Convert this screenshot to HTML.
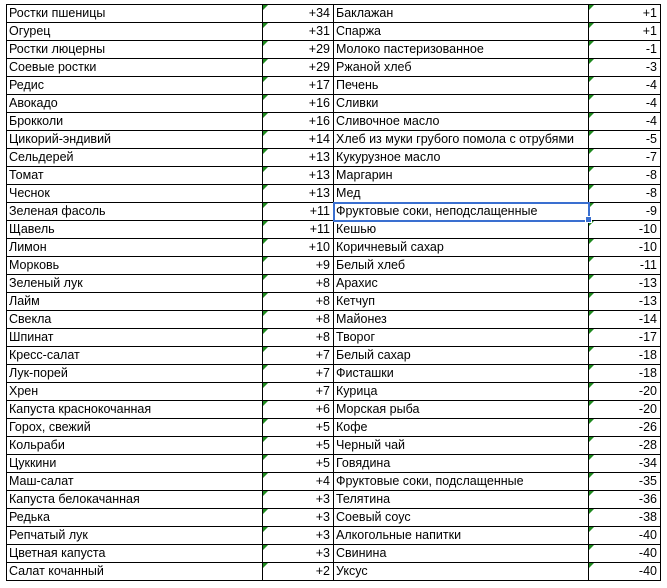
<!DOCTYPE html>
<html><head><meta charset="utf-8"><style>
body{margin:0;background:#fff;width:667px;height:588px;overflow:hidden;font-family:"Liberation Sans",Arial,sans-serif;font-size:12.5px;color:#000}
table{position:absolute;left:6px;top:4px;border-collapse:collapse;table-layout:fixed}
td{border:1px solid #000;height:17px;padding:0 2px;line-height:17px;white-space:nowrap;overflow:visible;position:relative}
td.n{text-align:right;padding-right:3px}
td.n::before{content:"";position:absolute;left:0;top:0;border-top:5px solid #1e8a1e;border-right:5px solid transparent}
.sel{position:absolute;left:333px;top:202px;width:253px;height:16px;border:2px solid #3a6fd0;box-sizing:content-box}
.h{position:absolute;left:585px;top:216px;width:5px;height:5px;background:#3a6fd0;border:1px solid #fff}
</style></head><body>
<table>
<colgroup><col style="width:256px"><col style="width:71px"><col style="width:255px"><col style="width:72px"></colgroup>
<tr><td>Ростки пшеницы</td><td class="n">+34</td><td>Баклажан</td><td class="n">+1</td></tr>
<tr><td>Огурец</td><td class="n">+31</td><td>Спаржа</td><td class="n">+1</td></tr>
<tr><td>Ростки люцерны</td><td class="n">+29</td><td>Молоко пастеризованное</td><td class="n">-1</td></tr>
<tr><td>Соевые ростки</td><td class="n">+29</td><td>Ржаной хлеб</td><td class="n">-3</td></tr>
<tr><td>Редис</td><td class="n">+17</td><td>Печень</td><td class="n">-4</td></tr>
<tr><td>Авокадо</td><td class="n">+16</td><td>Сливки</td><td class="n">-4</td></tr>
<tr><td>Брокколи</td><td class="n">+16</td><td>Сливочное масло</td><td class="n">-4</td></tr>
<tr><td>Цикорий-эндивий</td><td class="n">+14</td><td>Хлеб из муки грубого помола с отрубями</td><td class="n">-5</td></tr>
<tr><td>Сельдерей</td><td class="n">+13</td><td>Кукурузное масло</td><td class="n">-7</td></tr>
<tr><td>Томат</td><td class="n">+13</td><td>Маргарин</td><td class="n">-8</td></tr>
<tr><td>Чеснок</td><td class="n">+13</td><td>Мед</td><td class="n">-8</td></tr>
<tr><td>Зеленая фасоль</td><td class="n">+11</td><td>Фруктовые соки, неподслащенные</td><td class="n">-9</td></tr>
<tr><td>Щавель</td><td class="n">+11</td><td>Кешью</td><td class="n">-10</td></tr>
<tr><td>Лимон</td><td class="n">+10</td><td>Коричневый сахар</td><td class="n">-10</td></tr>
<tr><td>Морковь</td><td class="n">+9</td><td>Белый хлеб</td><td class="n">-11</td></tr>
<tr><td>Зеленый лук</td><td class="n">+8</td><td>Арахис</td><td class="n">-13</td></tr>
<tr><td>Лайм</td><td class="n">+8</td><td>Кетчуп</td><td class="n">-13</td></tr>
<tr><td>Свекла</td><td class="n">+8</td><td>Майонез</td><td class="n">-14</td></tr>
<tr><td>Шпинат</td><td class="n">+8</td><td>Творог</td><td class="n">-17</td></tr>
<tr><td>Кресс-салат</td><td class="n">+7</td><td>Белый сахар</td><td class="n">-18</td></tr>
<tr><td>Лук-порей</td><td class="n">+7</td><td>Фисташки</td><td class="n">-18</td></tr>
<tr><td>Хрен</td><td class="n">+7</td><td>Курица</td><td class="n">-20</td></tr>
<tr><td>Капуста краснокочанная</td><td class="n">+6</td><td>Морская рыба</td><td class="n">-20</td></tr>
<tr><td>Горох, свежий</td><td class="n">+5</td><td>Кофе</td><td class="n">-26</td></tr>
<tr><td>Кольраби</td><td class="n">+5</td><td>Черный чай</td><td class="n">-28</td></tr>
<tr><td>Цуккини</td><td class="n">+5</td><td>Говядина</td><td class="n">-34</td></tr>
<tr><td>Маш-салат</td><td class="n">+4</td><td>Фруктовые соки, подслащенные</td><td class="n">-35</td></tr>
<tr><td>Капуста белокачанная</td><td class="n">+3</td><td>Телятина</td><td class="n">-36</td></tr>
<tr><td>Редька</td><td class="n">+3</td><td>Соевый соус</td><td class="n">-38</td></tr>
<tr><td>Репчатый лук</td><td class="n">+3</td><td>Алкогольные напитки</td><td class="n">-40</td></tr>
<tr><td>Цветная капуста</td><td class="n">+3</td><td>Свинина</td><td class="n">-40</td></tr>
<tr><td>Салат кочанный</td><td class="n">+2</td><td>Уксус</td><td class="n">-40</td></tr>
</table>
<div class="sel"></div><div class="h"></div>
</body></html>
